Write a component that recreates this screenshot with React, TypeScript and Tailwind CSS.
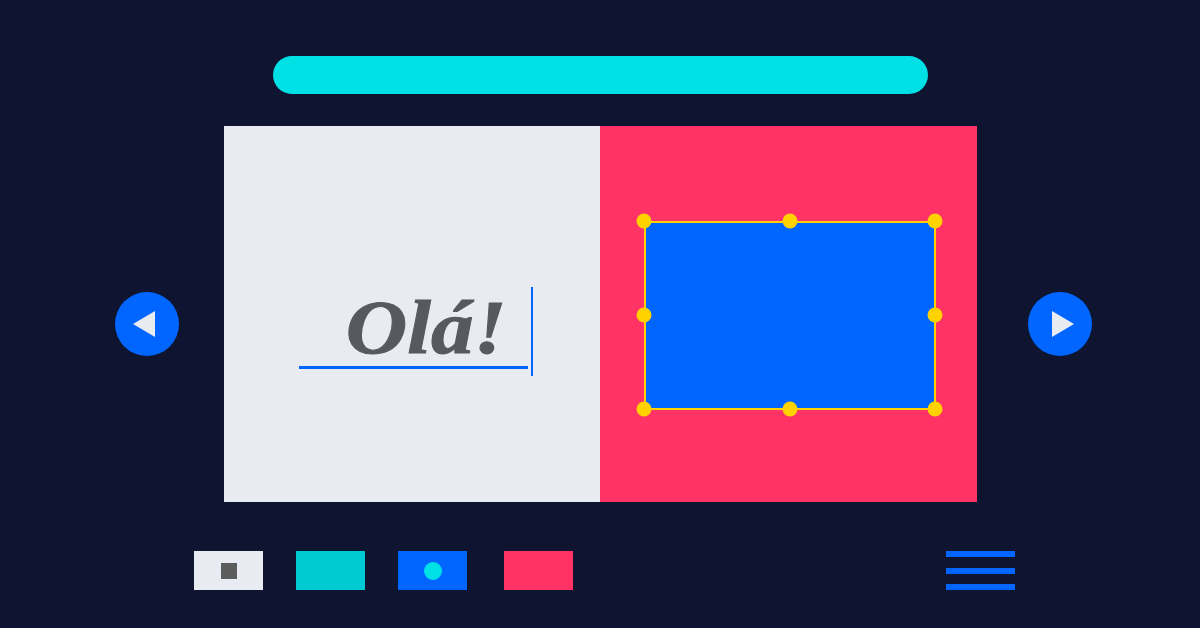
import React from 'react';

// little editor mock: title bar, slide canvas, swatches
function Handle({ pos }: { pos: string }) {
  return <span className={`absolute w-[15px] h-[15px] rounded-full bg-[#ffd200] -translate-x-1/2 -translate-y-1/2 ${pos}`} />;
}

function ArrowButton({ dir }: { dir: 'left' | 'right' }) {
  return (
    <button className="w-16 h-16 rounded-full bg-[#0066ff] flex items-center justify-center shrink-0">
      <svg width="22" height="26" viewBox="0 0 22 26" className={dir === 'left' ? '-ml-[6px]' : 'ml-[6px]'}>
        {dir === 'left' ? <polygon points="22,0 22,26 0,13" fill="#e8ebf2" /> : <polygon points="0,0 0,26 22,13" fill="#e8ebf2" />}
      </svg>
    </button>
  );
}

export default function App() {
  return (
    <div className="w-[1200px] h-[628px] bg-[#0f1430] flex flex-col overflow-hidden">
      <div className="pt-[56px] flex justify-center">
        <div className="w-[655px] h-[38px] rounded-full bg-[#00e1e6] ml-[1px]" />
      </div>

      <div className="mt-[32px] flex items-start">
        <div className="ml-[115px] mt-[166px]">
          <ArrowButton dir="left" />
        </div>
        <div className="ml-[45px] w-[753px] h-[376px] grid grid-cols-[376px_377px]">
          <div className="bg-[#e8ebf2] pl-[75px] pt-[161px]">
            <div className="flex items-start">
              <div className="w-[229px] h-[82px] border-b-[3px] border-[#0066ff] flex justify-end pr-[21px] pt-[2px]">
                <span
                  className="inline-block text-[76px] leading-none font-bold italic scale-x-[1.12] origin-right text-[#58595e] [-webkit-text-stroke:1px_#58595e]"
                  style={{ fontFamily: '"Liberation Serif", "DejaVu Serif", serif' }}
                >
                  Olá!
                </span>
              </div>
              <div className="ml-[3px] w-[2px] h-[89px] bg-[#0066ff]" />
            </div>
          </div>
          <div className="bg-[#ff3366] pl-[44px] pt-[95px]">
            <div className="relative w-[292px] h-[189px] bg-[#0066ff] border-2 border-[#ffd200]">
              <Handle pos="left-[-2px] top-[-2px]" />
              <Handle pos="left-1/2 top-[-2px]" />
              <Handle pos="left-[calc(100%+1px)] top-[-2px]" />
              <Handle pos="left-[-2px] top-[calc(50%-1px)]" />
              <Handle pos="left-[calc(100%+1px)] top-[calc(50%-1px)]" />
              <Handle pos="left-[-2px] top-[calc(100%+1px)]" />
              <Handle pos="left-1/2 top-[calc(100%+1px)]" />
              <Handle pos="left-[calc(100%+1px)] top-[calc(100%+1px)]" />
            </div>
          </div>
        </div>
        <div className="ml-[51px] mt-[166px]">
          <ArrowButton dir="right" />
        </div>
      </div>

      <div className="mt-[49px] flex items-start pl-[194px]">
        <div className="w-[69px] h-[39px] bg-[#e8ebf2] flex items-center justify-center">
          <div className="w-4 h-4 bg-[#5c5c5c]" />
        </div>
        <div className="ml-[33px] w-[69px] h-[39px] bg-[#00cbd3]" />
        <div className="ml-[33px] w-[69px] h-[39px] bg-[#0066ff] flex items-center justify-center">
          <div className="w-[18px] h-[18px] rounded-full bg-[#00e1e6]" />
        </div>
        <div className="ml-[37px] w-[69px] h-[39px] bg-[#ff3366]" />
        <div className="ml-[373px] w-[69px] flex flex-col">
          <div className="h-[6px] bg-[#0066ff]" />
          <div className="mt-[11px] h-[6px] bg-[#0066ff]" />
          <div className="mt-[10px] h-[6px] bg-[#0066ff]" />
        </div>
      </div>
    </div>
  );
}
